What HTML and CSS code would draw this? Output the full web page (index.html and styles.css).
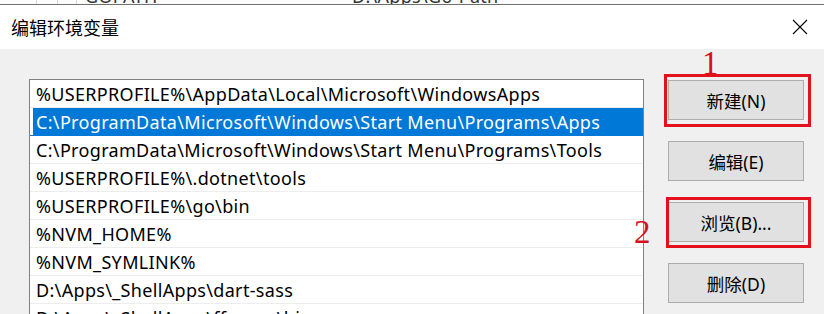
FILE: index.html
```html
<!DOCTYPE html>
<html lang="zh-CN">
<head>
<meta charset="utf-8">
<title>编辑环境变量</title>
<link rel="stylesheet" href="styles.css">
</head>
<body>
<div class="behind">
  <span class="col-line l1"></span><span class="col-line l2"></span><span class="col-line l3"></span>
  <span class="behind-name">GOPATH</span>
  <span class="behind-value">D:\Apps\Go-Path</span>
</div>
<div class="dialog">
  <div class="titlebar">
    <span class="title">编辑环境变量</span>
    <svg class="close" width="16" height="16" viewBox="0 0 16 16"><path d="M1 1 L15 15 M15 1 L1 15" stroke="#000" stroke-width="1.1" fill="none"/></svg>
  </div>
  <div class="body">
    <div class="list">
      <div class="row">%USERPROFILE%\AppData\Local\Microsoft\WindowsApps</div>
      <div class="row selected">C:\ProgramData\Microsoft\Windows\Start Menu\Programs\Apps</div>
      <div class="row">C:\ProgramData\Microsoft\Windows\Start Menu\Programs\Tools</div>
      <div class="row">%USERPROFILE%\.dotnet\tools</div>
      <div class="row">%USERPROFILE%\go\bin</div>
      <div class="row">%NVM_HOME%</div>
      <div class="row">%NVM_SYMLINK%</div>
      <div class="row">D:\Apps\_ShellApps\dart-sass</div>
      <div class="row">D:\Apps\_ShellApps\ffmpeg\bin</div>
    </div>
    <div class="buttons">
      <div class="btn-wrap">
        <button class="btn">新建(N)</button>
        <span class="mark mark-1"></span>
        <span class="num num-1">1</span>
      </div>
      <div class="btn-wrap">
        <button class="btn">编辑(E)</button>
      </div>
      <div class="btn-wrap">
        <button class="btn">浏览(B)...</button>
        <span class="mark mark-2"></span>
        <span class="num num-2">2</span>
      </div>
      <div class="btn-wrap">
        <button class="btn">删除(D)</button>
      </div>
    </div>
  </div>
</div>
</body>
</html>
```
FILE: styles.css
```css
html, body {
  margin: 0;
  padding: 0;
}
body {
  width: 824px;
  height: 314px;
  overflow: hidden;
  background: #f0f0f0;
  font-family: "Noto Sans", "Noto Sans CJK SC", sans-serif;
  color: #000;
}
.behind {
  position: relative;
  height: 4px;
  overflow: hidden;
  background: #fbfbfb;
  font-size: 18px;
}
.col-line {
  position: absolute;
  top: 0;
  width: 1px;
  height: 4px;
  background: #d8d8d8;
}
.l1 { left: 36px; }
.l2 { left: 57px; }
.l3 { left: 76px; }
.behind-name, .behind-value {
  position: absolute;
  top: -14px;
  line-height: 20px;
  color: #333;
  letter-spacing: 0.3px;
}
.behind-name { left: 85px; }
.behind-value { left: 352px; }
.dialog {
  border-top: 1px solid #707070;
}
.titlebar {
  position: relative;
  z-index: 2;
  height: 44px;
  background: #fff;
  display: flex;
  align-items: center;
  justify-content: space-between;
  padding: 0 16px 0 11px;
}
.title {
  font-family: "Noto Sans CJK SC", sans-serif;
  font-size: 18px;
  line-height: 20px;
}
.body {
  display: flex;
  align-items: flex-start;
  padding: 30px 0 0 29px;
}
.list {
  width: 613px;
  height: 260px;
  background: #fff;
  border: 1px solid #828282;
  border-bottom: none;
  font-size: 18px;
  letter-spacing: 0.33px;
}
.row {
  height: 27px;
  line-height: 28px;
  border-bottom: 1px solid #ededed;
  padding-left: 6px;
  white-space: nowrap;
}
.row.selected {
  background: linear-gradient(to right, transparent 3px, #0078d7 3px);
  color: #fff;
  border-bottom-color: #0078d7;
}
.buttons {
  display: flex;
  flex-direction: column;
  gap: 21px;
  margin-left: 24px;
  margin-top: 1px;
}
.btn-wrap {
  position: relative;
}
.btn {
  display: block;
  width: 136px;
  height: 40px;
  background: #e1e1e1;
  border: 1px solid #adadad;
  border-radius: 0;
  font-family: "Noto Sans", "Noto Sans CJK SC", sans-serif;
  font-size: 17.5px;
  color: #000;
  padding: 0;
}
.mark {
  position: absolute;
  border: 3px solid #e3111b;
  pointer-events: none;
}
.mark-1 {
  left: -4px;
  top: -6px;
  width: 141px;
  height: 47px;
}
.mark-2 {
  left: -2px;
  top: -5px;
  width: 139px;
  height: 45px;
}
.num {
  position: absolute;
  font-family: "Liberation Serif", serif;
  font-size: 33px;
  line-height: 33px;
  color: #d4101c;
}
.num-1 {
  left: 34px;
  top: -33px;
}
.num-2 {
  left: -34px;
  top: 14px;
}
```
